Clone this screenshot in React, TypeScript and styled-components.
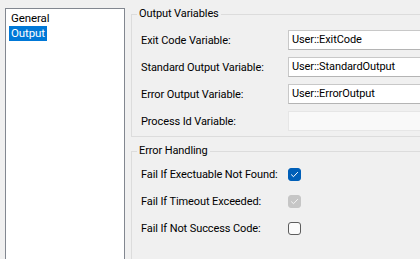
import { Fragment } from 'react';
import styled, { createGlobalStyle } from 'styled-components';

const FONT = `'Segoe UI', Roboto, 'Liberation Sans', sans-serif`;

const GlobalStyle = createGlobalStyle`
	html, body {
		margin: 0;
		padding: 0;
		background: #f0f0f0;
	}
	body {
		font-family: ${FONT};
		font-size: 11px;
		letter-spacing: -0.1px;
		color: #000;
	}
`;

const Page = styled.div`
	display: flex;
	align-items: flex-start;
	width: 420px;
	height: 259px;
	overflow: hidden;
	background: #f0f0f0;
`;

const ListBox = styled.ul`
	box-sizing: border-box;
	flex: none;
	width: 120px;
	height: 280px;
	margin: 8px 0 0 5px;
	padding: 2px 3px;
	list-style: none;
	background: #fff;
	border: 1px solid #828790;
	display: flex;
	flex-direction: column;
	align-items: flex-start;
`;

const ListItem = styled.li<{ $selected?: boolean }>`
	padding: 0 2px;
	line-height: 15px;
	font-size: 11.5px;
	background: ${(p) => (p.$selected ? '#0078d7' : 'transparent')};
	color: ${(p) => (p.$selected ? '#fff' : '#000')};
`;

const Side = styled.div`
	flex: none;
	width: 300px;
	margin-left: 6px;
	padding-top: 6px;
	display: flex;
	flex-direction: column;
	gap: 6px;
`;

const Group = styled.fieldset`
	margin: 0;
	padding: 0 0 0 5px;
	border: 1px solid #dcdcdc;
	min-width: 0;
`;

const Legend = styled.legend`
	padding: 0 2px;
	line-height: 16px;
`;

const Rows = styled.div<{ $gap: number; $top: number; $bottom: number }>`
	display: grid;
	grid-template-columns: 147px 1fr;
	align-items: center;
	row-gap: ${(p) => p.$gap}px;
	padding: ${(p) => p.$top}px 0 ${(p) => p.$bottom}px 4px;
`;

const Label = styled.span`
	line-height: 13px;
	white-space: nowrap;
`;

const TextBox = styled.div<{ $disabled?: boolean }>`
	box-sizing: border-box;
	height: 20px;
	padding: 0 3px;
	line-height: 18px;
	white-space: nowrap;
	background: ${(p) => (p.$disabled ? '#f9f9f9' : '#fff')};
	border: 1px solid ${(p) => (p.$disabled ? '#e6e6e6' : '#c8c8c8')};
	border-bottom-color: ${(p) => (p.$disabled ? '#e6e6e6' : '#b4b4b4')};
`;

type BoxState = 'checked' | 'disabled' | 'off';

const Box = styled.span<{ $state: BoxState }>`
	box-sizing: border-box;
	display: flex;
	align-items: center;
	justify-content: center;
	width: 13px;
	height: 13px;
	border-radius: 3px;
	background: ${(p) =>
		p.$state === 'checked' ? '#005fb8' : p.$state === 'disabled' ? '#c6c6c6' : '#fbfbfb'};
	border: 1px solid
		${(p) => (p.$state === 'checked' ? '#005fb8' : p.$state === 'disabled' ? '#c6c6c6' : '#5d5d5d')};
`;

function CheckBox({ state }: { state: BoxState }) {
	return (
		<Box $state={state}>
			{state !== 'off' && (
				<svg width='9' height='9' viewBox='0 0 9 9'>
					<polyline
						points='1.5,4.8 3.5,6.7 7.6,2.4'
						fill='none'
						stroke={state === 'checked' ? '#fff' : '#f4f4f4'}
						strokeWidth='1'
						strokeLinecap='round'
						strokeLinejoin='round'
					/>
				</svg>
			)}
		</Box>
	);
}

const variables = [
	{ label: 'Exit Code Variable:', value: 'User::ExitCode' },
	{ label: 'Standard Output Variable:', value: 'User::StandardOutput' },
	{ label: 'Error Output Variable:', value: 'User::ErrorOutput' },
	{ label: 'Process Id Variable:', value: '', disabled: true },
];

const checks: { label: string; state: BoxState }[] = [
	{ label: 'Fail If Exectuable Not Found:', state: 'checked' },
	{ label: 'Fail If Timeout Exceeded:', state: 'disabled' },
	{ label: 'Fail If Not Success Code:', state: 'off' },
];

export default function App() {
	return (
		<>
			<GlobalStyle />
			<Page>
				<ListBox>
					<ListItem>General</ListItem>
					<ListItem $selected>Output</ListItem>
				</ListBox>
				<Side>
					<Group>
						<Legend>Output Variables</Legend>
						<Rows $gap={7} $top={8} $bottom={5}>
							{variables.map((v) => (
								<Fragment key={v.label}>
									<Label>{v.label}</Label>
									<TextBox $disabled={v.disabled}>{v.value}</TextBox>
								</Fragment>
							))}
						</Rows>
					</Group>
					<Group>
						<Legend>Error Handling</Legend>
						<Rows $gap={14} $top={9} $bottom={40}>
							{checks.map((c) => (
								<Fragment key={c.label}>
									<Label>{c.label}</Label>
									<CheckBox state={c.state} />
								</Fragment>
							))}
						</Rows>
					</Group>
				</Side>
			</Page>
		</>
	);
}
